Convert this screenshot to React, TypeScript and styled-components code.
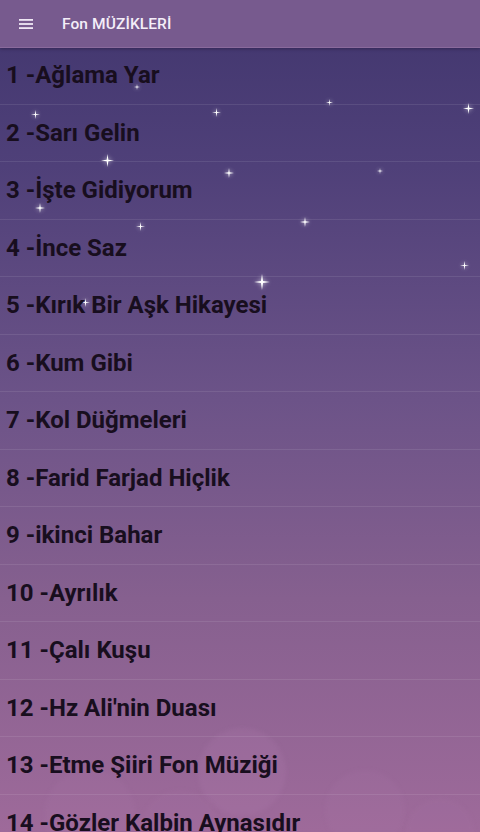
import React from 'react';
import styled, { createGlobalStyle } from 'styled-components';

// sayfa genel stilleri
const GlobalStyle = createGlobalStyle`
  html, body {
    margin: 0;
    padding: 0;
    height: 100%;
    overflow: hidden;
  }
  body {
    font-family: Roboto, "Noto Sans", sans-serif;
  }
`;

const Screen = styled.div`
  position: relative;
  width: 480px;
  height: 832px;
  overflow: hidden;
  display: flex;
  flex-direction: column;
  background: linear-gradient(180deg, #41366e 0%, #4f4079 20%, #6c5388 48%, #86608f 72%, #9e6a9a 100%);
`;

const AppBar = styled.header`
  position: relative;
  z-index: 2;
  height: 47px;
  flex-shrink: 0;
  display: flex;
  align-items: center;
  padding-left: 19px;
  gap: 29px;
  background: #775a8e;
  box-shadow: 0 1px 0 #8a6a9c, 0 2px 3px rgba(30, 15, 50, 0.45);
`;

const MenuIcon = styled.svg`
  width: 14px;
  height: 12px;
  display: block;
`;

const Title = styled.h1`
  margin: 0;
  font-size: 15.5px;
  font-weight: 500;
  color: #f4eef8;
  letter-spacing: 0.1px;
`;

const Sky = styled.div`
  position: absolute;
  inset: 0;
  z-index: 0;
  pointer-events: none;
`;

const Star = styled.svg<{ $x: number; $y: number; $s: number }>`
  position: absolute;
  left: ${p => p.$x - p.$s / 2}px;
  top: ${p => p.$y - p.$s / 2}px;
  width: ${p => p.$s}px;
  height: ${p => p.$s}px;
  filter: drop-shadow(0 0 2px rgba(255, 255, 255, 0.7));
`;

const Cloud = styled.div<{ $x: number; $y: number; $r: number; $a: number }>`
  position: absolute;
  left: ${p => p.$x - p.$r}px;
  top: ${p => p.$y - p.$r}px;
  width: ${p => p.$r * 2}px;
  height: ${p => p.$r * 2}px;
  border-radius: 50%;
  background: rgba(180, 130, 180, ${p => p.$a});
  filter: blur(2px);
`;

const List = styled.ul`
  position: relative;
  z-index: 1;
  margin: 0;
  padding: 0;
  list-style: none;
`;

const Row = styled.li`
  height: 57.5px;
  box-sizing: border-box;
  display: flex;
  align-items: center;
  padding-left: 6px;
  border-bottom: 1px solid rgba(255, 255, 255, 0.09);
  font-size: 24px;
  font-weight: 700;
  color: #180e1e;
  white-space: nowrap;
`;

const songs = [
  'Ağlama Yar',
  'Sarı Gelin',
  'İşte Gidiyorum',
  'İnce Saz',
  'Kırık Bir Aşk Hikayesi',
  'Kum Gibi',
  'Kol Düğmeleri',
  'Farid Farjad Hiçlik',
  'ikinci Bahar',
  'Ayrılık',
  'Çalı Kuşu',
  "Hz Ali'nin Duası",
  'Etme Şiiri Fon Müziği',
  'Gözler Kalbin Aynasıdır',
];

// yıldızların konumları (x, y, boyut)
const stars: [number, number, number][] = [
  [35, 114, 9], [137, 87, 6], [216, 112, 9], [329, 102, 7], [468, 108, 11],
  [107, 160, 13], [229, 173, 10], [380, 171, 6], [40, 208, 10], [140, 226, 9],
  [305, 222, 10], [464, 265, 9], [262, 282, 16], [85, 302, 9],
];

const clouds: [number, number, number, number][] = [
  [242, 772, 44, 0.18], [90, 815, 46, 0.1], [365, 810, 40, 0.1],
  [440, 832, 34, 0.08], [180, 830, 40, 0.08],
];

const App: React.FC = () => {
  return (
    <Screen>
      <GlobalStyle />
      <Sky>
        {clouds.map(([x, y, r, a], i) => (
          <Cloud key={i} $x={x} $y={y} $r={r} $a={a} />
        ))}
        {stars.map(([x, y, s], i) => (
          <Star key={i} $x={x} $y={y} $s={s} viewBox="0 0 20 20">
            <path d="M10 0 L11.3 8.7 L20 10 L11.3 11.3 L10 20 L8.7 11.3 L0 10 L8.7 8.7 Z" fill="#ffffff" />
          </Star>
        ))}
      </Sky>
      <AppBar>
        <MenuIcon viewBox="0 0 14 12">
          <rect x="0" y="1" width="14" height="1.8" fill="#efe7f4" />
          <rect x="0" y="5.1" width="14" height="1.8" fill="#efe7f4" />
          <rect x="0" y="9.2" width="14" height="1.8" fill="#efe7f4" />
        </MenuIcon>
        <Title>Fon MÜZİKLERİ</Title>
      </AppBar>
      <List>
        {songs.map((name, i) => (
          <Row key={i}>{`${i + 1} -${name}`}</Row>
        ))}
      </List>
    </Screen>
  );
};

export default App;
